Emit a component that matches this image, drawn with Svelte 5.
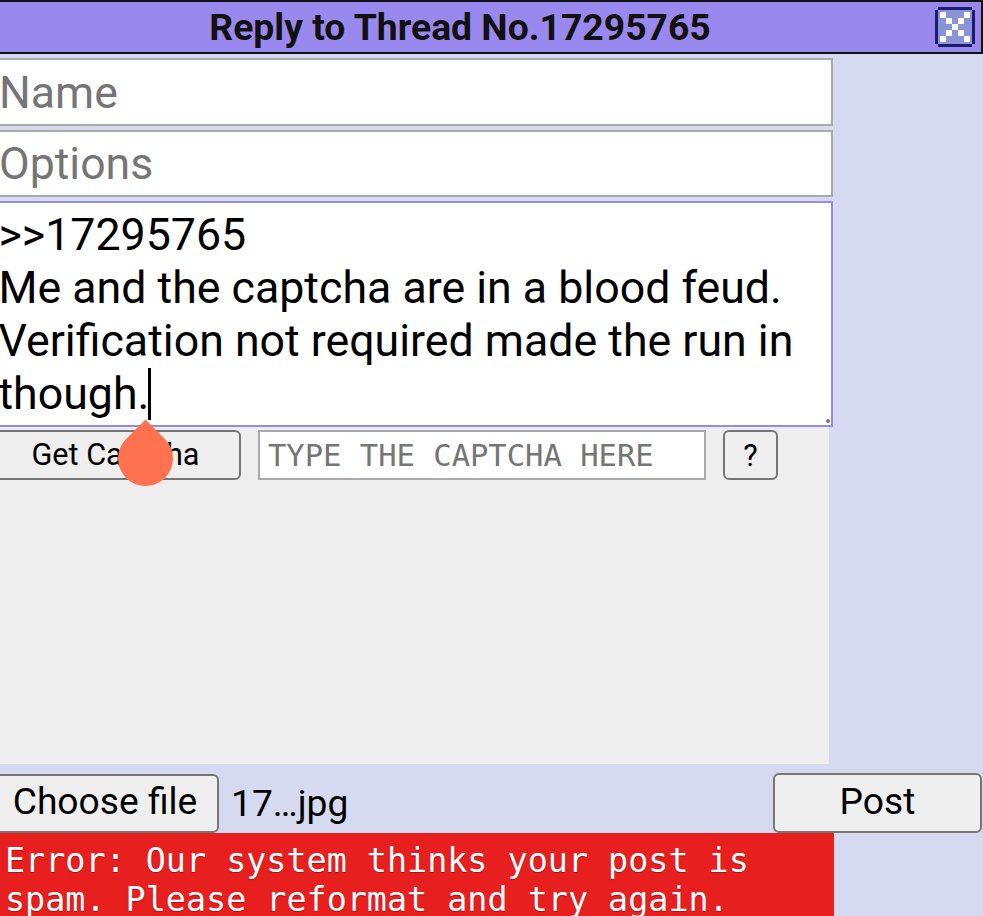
<script lang="ts">
  // white cells of the close sprite: the two diagonals of a 5x5 grid
  const crossCells = [0, 1, 2, 3, 4].flatMap((i) => [[i, i], [4 - i, i]]);
</script>

<div class="reply">
  <header class="title-bar">
    <span class="title">Reply to Thread No.17295765</span>
    <svg class="close" viewBox="0 0 40 40" aria-label="Close">
      <path d="M3 0h34v3h3v34h-3v3H3v-3H0V3h3z" fill="#1c1c70" />
      <rect x="3" y="3" width="34" height="34" fill="#8b93d8" />
      {#each crossCells as [x, y]}
        <rect x={5 + x * 6} y={5 + y * 6} width="6" height="6" fill="#fff" />
      {/each}
    </svg>
  </header>

  <div class="form">
    <input class="field" placeholder="Name" />
    <input class="field" placeholder="Options" />
    <div class="comment">
      <div>&gt;&gt;17295765</div>
      <div>Me and the captcha are in a blood feud.</div>
      <div>Verification not required made the run in</div>
      <div>though.<span class="caret"><span class="handle"></span></span></div>
      <span class="grip"></span>
    </div>

    <div class="captcha">
      <div class="captcha-row">
        <button class="btn get">Get Captcha</button>
        <input class="captcha-input" placeholder="TYPE THE CAPTCHA HERE" />
        <button class="btn help">?</button>
      </div>
    </div>
  </div>

  <div class="file-row">
    <button class="btn choose">Choose file</button>
    <span class="file-name">17…jpg</span>
    <button class="btn post">Post</button>
  </div>

  <div class="error">Error: Our system thinks your post is spam. Please reformat and try again.</div>
</div>

<style>
  :global(body) {
    margin: 0;
    background: #d6daf0;
    overflow: hidden;
  }

  .reply {
    width: 983px;
    height: 916px;
    overflow: hidden;
    font-family: Roboto, sans-serif;
    color: #000;
  }

  .title-bar {
    position: relative;
    box-sizing: border-box;
    height: 54px;
    padding-right: 61px;
    background: #9988ee;
    border: 2px solid #111;
    border-left-width: 0;
    display: flex;
    align-items: center;
    justify-content: center;
  }

  .title {
    font-size: 37.3px;
    font-weight: 700;
    color: #111;
  }

  .close {
    position: absolute;
    left: 935px;
    top: 5px;
    width: 40px;
    height: 40px;
    filter: blur(0.6px);
  }

  .form {
    width: 833px;
    padding-top: 4px;
    display: flex;
    flex-direction: column;
  }

  .field {
    box-sizing: border-box;
    width: 837px;
    height: 67.5px;
    margin: 0 0 4px -4px;
    padding: 2px 2px 0 1px;
    border: 2px solid #aaa;
    background: #fff;
    font: 44.6px Roboto, sans-serif;
    outline: none;
  }

  .field::placeholder {
    color: #757575;
  }

  .comment {
    position: relative;
    box-sizing: border-box;
    width: 838px;
    height: 226px;
    margin-left: -5px;
    padding: 6px 1px 0 1.5px;
    border: 2px solid #9988ee;
    background: #fff;
    font-size: 44.7px;
    line-height: 53px;
    z-index: 1;
  }

  .caret {
    position: relative;
    display: inline-block;
    width: 3px;
    height: 52px;
    margin-left: -1.5px;
    background: #000;
    vertical-align: -11px;
  }

  .handle {
    position: absolute;
    left: -29.5px;
    top: 63px;
    width: 55px;
    height: 55px;
    background: #ff7250;
    border-radius: 50% 0 50% 50%;
    transform: rotate(-45deg);
  }

  .grip {
    position: absolute;
    right: 1px;
    bottom: 2px;
    width: 4px;
    height: 4px;
    background: #777;
    border-radius: 50%;
  }

  .captcha {
    box-sizing: border-box;
    width: 829px;
    height: 337px;
    background: #eee;
    padding-top: 3px;
  }

  .captcha-row {
    display: flex;
    align-items: flex-start;
  }

  .btn {
    box-sizing: border-box;
    border: 2px solid #767676;
    border-radius: 6px;
    background: #efefef;
    color: #000;
    font-family: Roboto, sans-serif;
    padding: 0;
  }

  .get {
    width: 251px;
    height: 50px;
    margin-left: -10px;
    padding-bottom: 2px;
    font-size: 30.6px;
  }

  .captcha-input {
    box-sizing: border-box;
    width: 448px;
    height: 50px;
    margin: 0 17px 0 17px;
    padding: 0 8px;
    border: 2px solid #aaa;
    background: #fff;
    font: 30.5px "DejaVu Sans Mono", monospace;
    outline: none;
  }

  .captcha-input::placeholder {
    color: #757575;
  }

  .help {
    width: 55px;
    height: 50px;
    font-size: 30.6px;
  }

  .file-row {
    display: flex;
    align-items: center;
    height: 60px;
    margin-top: 9px;
  }

  .choose {
    width: 228px;
    height: 59px;
    margin-left: -9px;
    padding-bottom: 4px;
    font-size: 37.2px;
  }

  .file-name {
    margin-left: 12px;
    font-size: 37.2px;
  }

  .post {
    width: 209px;
    height: 60px;
    margin-left: auto;
    margin-right: 1px;
    padding-bottom: 4px;
    font-size: 37.2px;
  }

  .error {
    box-sizing: border-box;
    width: 834px;
    height: 90px;
    padding: 8px 5px 0;
    background: #e81f1f;
    color: #fff;
    font-family: "DejaVu Sans Mono", monospace;
    font-size: 33.4px;
    line-height: 39px;
    text-shadow: 0 1px 1px rgba(120, 0, 0, 0.5);
  }
</style>
